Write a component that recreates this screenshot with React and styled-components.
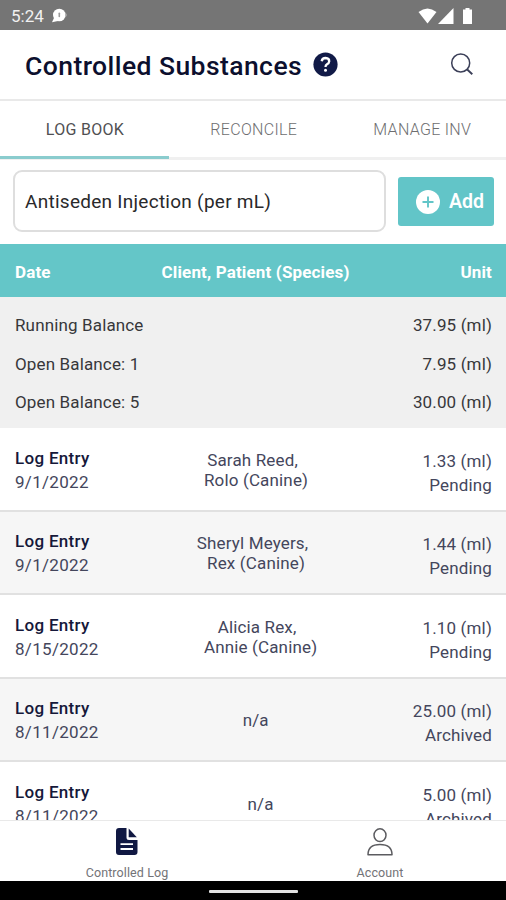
import React from 'react'
import styled, { createGlobalStyle } from 'styled-components'

const GlobalStyle = createGlobalStyle`
* {
    box-sizing: border-box;
}

body {
    margin: 0;
    font-family: Roboto, 'Liberation Sans', sans-serif;
    background: #fff;
}
`

const Screen = styled.div`
width: 506px;
height: 900px;
display: flex;
flex-direction: column;
overflow: hidden;
background: #fff;
color: #1c1c1e;
`

const StatusBar = styled.div`
height: 30px;
flex-shrink: 0;
display: flex;
align-items: center;
justify-content: space-between;
padding: 2px 32px 0 11px;
background: #757575;
`

const StatusLeft = styled.div`
display: flex;
align-items: center;
gap: 7px;
`

const StatusTime = styled.span`
font-size: 17px;
line-height: 20px;
color: #f1f1f1;
`

const Header = styled.header`
height: 71px;
flex-shrink: 0;
display: flex;
align-items: center;
padding: 0 32px 0 25px;
border-bottom: 2px solid #e9e9e9;
`

const Title = styled.h1`
margin: 3px 11px 0 0;
font-size: 26.5px;
font-weight: 500;
line-height: 32px;
letter-spacing: 0.43px;
color: #0c0f2e;
`

const SearchButton = styled.button`
display: flex;
margin: 0 0 0 auto;
padding: 0;
border: 0;
background: none;
`

const Tabs = styled.nav`
height: 59px;
flex-shrink: 0;
display: grid;
grid-template-columns: 169px 1fr 1fr;
border-bottom: 3px solid #f0f0f0;
`

const Tab = styled.a`
height: 58px;
display: flex;
align-items: center;
justify-content: center;
padding: 2px 0 0 1px;
border-bottom: 3px solid ${({ $active }) => ($active ? '#8accce' : 'transparent')};
font-size: 16px;
font-weight: ${({ $active }) => ($active ? 400 : 300)};
letter-spacing: 0.3px;
color: ${({ $active }) => ($active ? '#505052' : '#6e6e70')};
`

const Toolbar = styled.div`
height: 84px;
flex-shrink: 0;
display: flex;
align-items: flex-start;
justify-content: space-between;
padding: 10px 12px 0 13px;
`

const SubstanceField = styled.div`
width: 373px;
height: 62px;
display: flex;
align-items: center;
padding: 0 0 0 10px;
border: 2px solid #dedede;
border-radius: 9px;
font-size: 19px;
letter-spacing: 0.27px;
color: #29292b;
`

const AddButton = styled.button`
width: 96px;
height: 49px;
display: flex;
align-items: center;
gap: 9px;
margin: 7px 0 0;
padding: 0 0 0 18px;
border: 0;
border-radius: 3px;
background: #62c5c8;
color: #fff;
font-family: inherit;
font-size: 19.5px;
font-weight: 600;
`

const TableHead = styled.div`
height: 53px;
flex-shrink: 0;
display: flex;
align-items: center;
justify-content: space-between;
padding: 2px 14px 0 15px;
background: #64c6c8;
color: #fff;
font-size: 17px;
font-weight: 700;
letter-spacing: 0.15px;
`

const Balances = styled.div`
height: 131px;
flex-shrink: 0;
padding: 9px 14px 0 15px;
background: #f0f0f0;
`

const BalanceRow = styled.div`
height: 38.5px;
display: flex;
align-items: center;
justify-content: space-between;
font-size: 17px;
letter-spacing: 0.14px;
color: #37373a;
`

const Entries = styled.div`
flex: 1;
min-height: 0;
overflow: hidden;
`

const Entry = styled.div`
height: 83.5px;
display: flex;
justify-content: space-between;
padding: 0 14px 0 15px;
border-bottom: 2px solid #e1e1e1;
background: ${({ $shaded }) => ($shaded ? '#f6f6f6' : '#fff')};
font-size: 17px;
line-height: 24px;
letter-spacing: 0.15px;
color: #44465c;
`

const EntryDate = styled.div`
padding-top: 17.8px;
letter-spacing: 0.3px;
`

const EntryKind = styled.div`
font-weight: 500;
color: #15183a;
`

const EntryClient = styled.div`
padding-top: ${({ $single }) => ($single ? '31.8px' : '21.8px')};
line-height: 20px;
text-align: center;
`

const ClientName = styled.div`
padding-right: 7px;
`

const EntryUnit = styled.div`
padding-top: 20.8px;
text-align: right;
`

const BottomNav = styled.nav`
height: 61px;
flex-shrink: 0;
display: grid;
grid-template-columns: 1fr 1fr;
border-top: 1px solid #e9e9e9;
background: #fff;
`

const NavItem = styled.a`
display: flex;
flex-direction: column;
align-items: center;
padding: 7px 0 0 1px;
`

const NavLabel = styled.span`
margin-top: ${({ $gap }) => $gap}px;
font-size: 12.5px;
line-height: 18px;
letter-spacing: 0.1px;
color: #737377;
`

const SystemBar = styled.div`
height: 19px;
flex-shrink: 0;
display: flex;
justify-content: center;
padding: 9px 0 0 1px;
background: #000;
`

const HomeHandle = styled.div`
width: 89px;
height: 3px;
border-radius: 1px;
background: #e2e2e2;
`

const balances = [
    { label: 'Running Balance', amount: '37.95 (ml)' },
    { label: 'Open Balance: 1', amount: '7.95 (ml)' },
    { label: 'Open Balance: 5', amount: '30.00 (ml)' },
]

const entries = [
    { date: '9/1/2022', client: 'Sarah Reed,', patient: 'Rolo (Canine)', unit: '1.33 (ml)', status: 'Pending' },
    { date: '9/1/2022', client: 'Sheryl Meyers,', patient: 'Rex (Canine)', unit: '1.44 (ml)', status: 'Pending' },
    { date: '8/15/2022', client: 'Alicia Rex,', patient: 'Annie (Canine)', unit: '1.10 (ml)', status: 'Pending' },
    { date: '8/11/2022', unit: '25.00 (ml)', status: 'Archived' },
    { date: '8/11/2022', unit: '5.00 (ml)', status: 'Archived' },
]

const NoticeIcon = () => (
    <svg width="18" height="16" viewBox="0 0 18 16">
        <circle cx="8.3" cy="7" r="6.3" fill="#fff" />
        <path d="M1 14.2 3.2 9.5 7 13z" fill="#fff" />
        <path d="M14 4.5q3.600 2.500 0 5z" fill="#b5b5b5" />
        <path d="M8.3 5.2v3.2" stroke="#9b9b9b" strokeWidth="1.6" strokeLinecap="round" />
    </svg>
)

const StatusIcons = () => (
    <svg width="56" height="18" viewBox="0 0 56 18">
        <path d="M0.5 5Q9.500-2 18.500 5L9.500 16.500z" fill="#fff" />
        <path d="M35.500 1V17H20z" fill="#fff" />
        <path d="M45 2.500h2.500V1h4v1.500h2.500V17h-9z" fill="#fff" />
    </svg>
)

const HelpIcon = () => (
    <svg width="25" height="25" viewBox="0 0 25 25">
        <circle cx="12.500" cy="12.500" r="12.100" fill="#111a47" />
        <path d="M8.700 9.200Q9.200 6 12.600 6Q16.300 6.200 16.200 9.300Q16 11.200 14 12.300Q12.500 13.200 12.500 15" fill="none" stroke="#fff" strokeWidth="2.300" />
        <circle cx="12.500" cy="18.200" r="1.500" fill="#fff" />
    </svg>
)

const SearchIcon = () => (
    <svg width="24" height="24" viewBox="0 0 24 24" fill="none" stroke="#3b3f58">
        <circle cx="10.700" cy="10" r="9" strokeWidth="1.500" />
        <path d="M17.200 16.500 22.300 21.300" strokeWidth="1.900" />
    </svg>
)

const PlusIcon = () => (
    <svg width="24" height="24" viewBox="0 0 24 24">
        <circle cx="12" cy="12" r="12" fill="#fff" />
        <path d="M12 6.500v11M6.500 12h11" stroke="#62c5c8" strokeWidth="1.900" />
    </svg>
)

const LogIcon = () => (
    <svg width="22" height="27" viewBox="0 0 22 27">
        <path d="M3 0H10.500V9.500Q10.500 12 13 12H21.500V24Q21.500 27 18.500 27H3Q0 27 0 24V3Q0 0 3 0z" fill="#101842" />
        <path d="M12.700 0.500 20.800 9.300H12.700z" fill="#101842" />
        <path d="M4.500 16.200h12.500M4.500 21h12.500" stroke="#fff" strokeWidth="1.800" />
    </svg>
)

const AccountIcon = () => (
    <svg width="26" height="28" viewBox="0 0 26 28" fill="none" stroke="#5c5c60" strokeWidth="1.500">
        <ellipse cx="13" cy="7.200" rx="6" ry="6.400" />
        <path d="M1 26.700Q1 16.500 13 16.500T25 26.700z" strokeLinejoin="round" />
    </svg>
)

const App = () => {
    return (
        <>
            <GlobalStyle />
            <Screen>
                <StatusBar>
                    <StatusLeft>
                        <StatusTime>5:24</StatusTime>
                        <NoticeIcon />
                    </StatusLeft>
                    <StatusIcons />
                </StatusBar>
                <Header>
                    <Title>Controlled Substances</Title>
                    <HelpIcon />
                    <SearchButton aria-label="Search"><SearchIcon /></SearchButton>
                </Header>
                <Tabs>
                    <Tab $active>LOG BOOK</Tab>
                    <Tab>RECONCILE</Tab>
                    <Tab>MANAGE INV</Tab>
                </Tabs>
                <Toolbar>
                    <SubstanceField>Antiseden Injection (per mL)</SubstanceField>
                    <AddButton><PlusIcon />Add</AddButton>
                </Toolbar>
                <TableHead>
                    <span>Date</span>
                    <span>Client, Patient (Species)</span>
                    <span>Unit</span>
                </TableHead>
                <Balances>
                    {balances.map(({ label, amount }) => (
                        <BalanceRow key={label}>
                            <span>{label}</span>
                            <span>{amount}</span>
                        </BalanceRow>
                    ))}
                </Balances>
                <Entries>
                    {entries.map((entry, i) => (
                        <Entry key={i} $shaded={i % 2 === 1}>
                            <EntryDate>
                                <EntryKind>Log Entry</EntryKind>
                                {entry.date}
                            </EntryDate>
                            <EntryClient $single={!entry.client}>
                                {entry.client ? (
                                    <>
                                        <ClientName>{entry.client}</ClientName>
                                        {entry.patient}
                                    </>
                                ) : 'n/a'}
                            </EntryClient>
                            <EntryUnit>
                                <div>{entry.unit}</div>
                                {entry.status}
                            </EntryUnit>
                        </Entry>
                    ))}
                </Entries>
                <BottomNav>
                    <NavItem><LogIcon /><NavLabel $gap={9}>Controlled Log</NavLabel></NavItem>
                    <NavItem><AccountIcon /><NavLabel $gap={8}>Account</NavLabel></NavItem>
                </BottomNav>
                <SystemBar><HomeHandle /></SystemBar>
            </Screen>
        </>
    )
}

export default App
